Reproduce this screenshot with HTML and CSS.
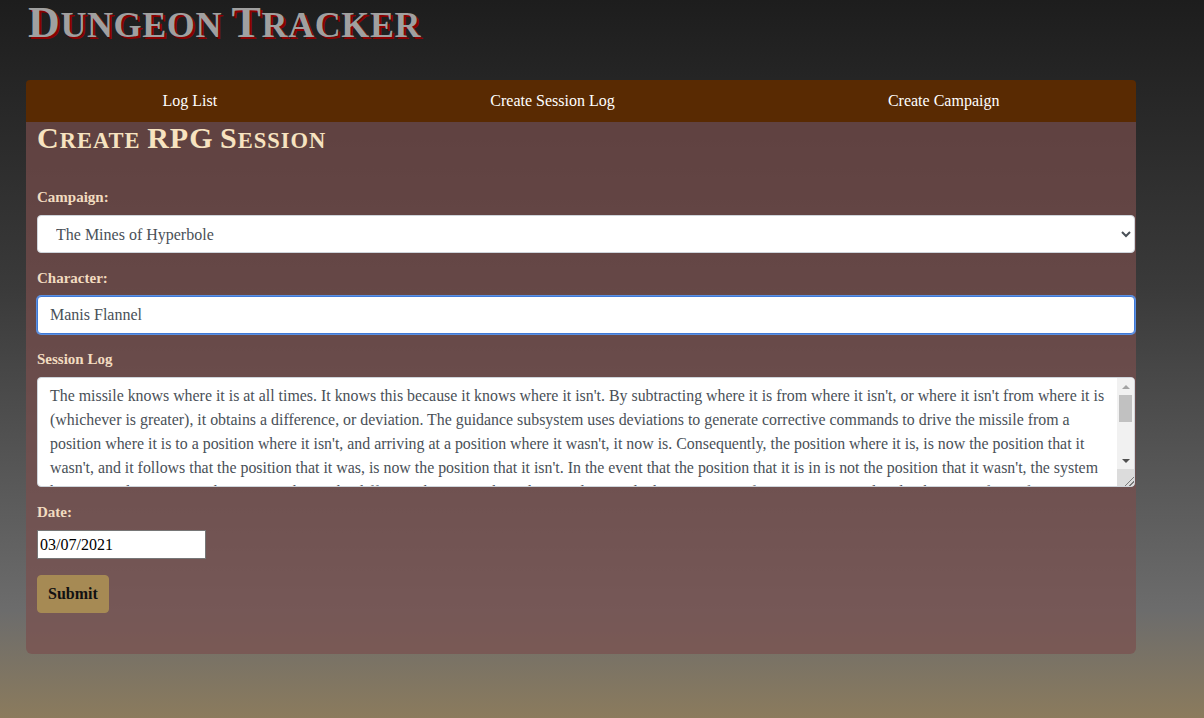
FILE: index.html
```html
<!DOCTYPE html>
<html lang="en">
<head>
<meta charset="utf-8">
<title>Dungeon Tracker</title>
<link rel="stylesheet" href="styles.css">
</head>
<body>
<div class="page">
  <header class="site-header">
    <h1 class="site-title"><span class="big">D</span>ungeon <span class="big">T</span>racker</h1>
  </header>
  <nav class="tabs">
    <a class="tab" href="#">Log List</a>
    <a class="tab" href="#">Create Session Log</a>
    <a class="tab" href="#">Create Campaign</a>
  </nav>
  <main class="card">
    <h2 class="card-title"><span class="big">C</span>reate <span class="big">RPG</span> <span class="big">S</span>ession</h2>
    <form class="session-form">
      <div class="form-group">
        <label class="form-label" for="campaign">Campaign:</label>
        <select class="form-control form-select" id="campaign">
          <option>The Mines of Hyperbole</option>
        </select>
      </div>
      <div class="form-group">
        <label class="form-label" for="character">Character:</label>
        <input class="form-control focused" id="character" type="text" value="Manis Flannel">
      </div>
      <div class="form-group">
        <label class="form-label" for="log">Session Log</label>
        <div class="log-wrap">
          <textarea class="form-control log-area" id="log">The missile knows where it is at all times. It knows this because it knows where it isn't. By subtracting where it is from where it isn't, or where it isn't from where it is (whichever is greater), it obtains a difference, or deviation. The guidance subsystem uses deviations to generate corrective commands to drive the missile from a position where it is to a position where it isn't, and arriving at a position where it wasn't, it now is. Consequently, the position where it is, is now the position that it wasn't, and it follows that the position that it was, is now the position that it isn't. In the event that the position that it is in is not the position that it wasn't, the system has acquired a variation, the variation being the difference between where the missile is, and where it wasn't. If variation is considered to be a significant factor, it too may be corrected by the GEO. However, the missile must also know where it was. The missile guidance computer scenario works as follows. Because a variation has modified some of the information the missile has obtained, it is not sure just where it is. However, it is sure where it isn't, within reason, and it knows where it was. It now subtracts where it should be from where it wasn't, or vice versa, and by differentiating this from the algebraic sum of where it shouldn't be, and where it was, it is able to obtain the deviation and its variation, which is called error.</textarea>
          <div class="fake-scrollbar" aria-hidden="true">
            <div class="sb-btn sb-up"></div>
            <div class="sb-track"><div class="sb-thumb"></div></div>
            <div class="sb-btn sb-down"></div>
          </div>
          <div class="fake-resizer" aria-hidden="true"></div>
        </div>
      </div>
      <div class="form-group">
        <label class="form-label" for="date">Date:</label>
        <input class="date-input" id="date" type="text" value="03/07/2021">
      </div>
      <button class="submit-btn" type="button">Submit</button>
    </form>
  </main>
</div>
</body>
</html>
```

FILE: styles.css
```css
html, body {
  margin: 0;
  padding: 0;
}

body {
  min-height: 718px;
  background: linear-gradient(to bottom, #1d1d1d 0%, #3a3a3a 40%, #6c6c6c 85%, #8b7b5d 100%);
  font-family: "Liberation Serif", "Times New Roman", serif;
  color: #212529;
}

.page {
  width: 1110px;
  padding-left: 26px;
}

.site-header {
  height: 80px;
}

.site-title {
  margin: 0;
  padding-left: 2px;
  font-size: 36px;
  line-height: 46px;
  font-weight: bold;
  text-transform: uppercase;
  letter-spacing: 0.6px;
  color: #a0a0a0;
  text-shadow: 2px 2px 0 #8b0000;
}

.site-title .big {
  font-size: 44px;
}

.tabs {
  display: flex;
  height: 42px;
  background: #592a02;
  border-radius: 4px 4px 0 0;
}

.tab {
  flex: 1 1 auto;
  display: flex;
  align-items: center;
  justify-content: center;
  color: #ffffff;
  text-decoration: none;
  font-size: 16px;
}

.card {
  background: rgba(122, 78, 76, 0.68);
  border-radius: 0 0 6px 6px;
  padding: 0 1px 41px 11px;
}

.card-title {
  margin: 0;
  height: 66px;
  font-size: 22.5px;
  line-height: 32px;
  font-weight: bold;
  text-transform: uppercase;
  letter-spacing: 1px;
  color: #f7e3c0;
}

.card-title .big {
  font-size: 30px;
}

.session-form {
  display: flex;
  flex-direction: column;
  align-items: flex-start;
}

.form-group {
  align-self: stretch;
  margin-bottom: 16px;
  display: flex;
  flex-direction: column;
  align-items: flex-start;
}

.form-label {
  font-size: 15px;
  line-height: 19px;
  font-weight: bold;
  color: #f2dcc0;
  margin-bottom: 8px;
}

.form-control {
  box-sizing: border-box;
  align-self: stretch;
  height: 38px;
  padding: 6px 12px;
  font-family: "Liberation Serif", "Times New Roman", serif;
  font-size: 16px;
  line-height: 24px;
  color: #495057;
  background: #ffffff;
  border: 1px solid #ced4da;
  border-radius: 4px;
}

.form-select {
  padding-left: 14px;
}

.focused {
  border-color: #3f79d6;
  box-shadow: 0 0 0 1px #5c8fe0;
  outline: none;
}

.log-wrap {
  position: relative;
  align-self: stretch;
  display: flex;
}

.log-area {
  flex: 1;
  display: block;
  height: 110px;
  padding-right: 29px;
  font-size: 15.9px;
  resize: none;
  overflow: hidden;
}

.fake-scrollbar {
  position: absolute;
  top: 1px;
  right: 1px;
  bottom: 18px;
  width: 17px;
  display: flex;
  flex-direction: column;
  background: #f1f1f1;
  border-top-right-radius: 3px;
}

.sb-btn {
  height: 17px;
  flex: none;
  display: flex;
  align-items: center;
  justify-content: center;
}

.sb-up::before {
  content: "";
  border-left: 4px solid transparent;
  border-right: 4px solid transparent;
  border-bottom: 4px solid #a3a3a3;
}

.sb-down::before {
  content: "";
  border-left: 4px solid transparent;
  border-right: 4px solid transparent;
  border-top: 4px solid #505050;
}

.sb-track {
  flex: 1;
  padding: 0 2px;
}

.sb-thumb {
  height: 27px;
  background: #c1c1c1;
}

.fake-resizer {
  position: absolute;
  right: 1px;
  bottom: 1px;
  width: 17px;
  height: 17px;
  background-color: #dcdcdc;
  background-image: linear-gradient(135deg, transparent 17px, #7a7a7a 17px, #7a7a7a 18px, transparent 18px, transparent 20.5px, #7a7a7a 20.5px, #7a7a7a 21.5px, transparent 21.5px);
  border-bottom-right-radius: 3px;
}

.date-input {
  box-sizing: border-box;
  width: 169px;
  height: 29px;
  padding: 1px 2px;
  font-family: "Liberation Serif", "Times New Roman", serif;
  font-size: 16px;
  color: #000000;
  background: #ffffff;
  border: 1px solid #767676;
  border-radius: 0;
}

.submit-btn {
  height: 38px;
  padding: 6px 10px;
  font-family: "Liberation Serif", "Times New Roman", serif;
  font-size: 16px;
  font-weight: bold;
  color: #111111;
  background: #a68a54;
  border: 1px solid #a68a54;
  border-radius: 4px;
}
```
